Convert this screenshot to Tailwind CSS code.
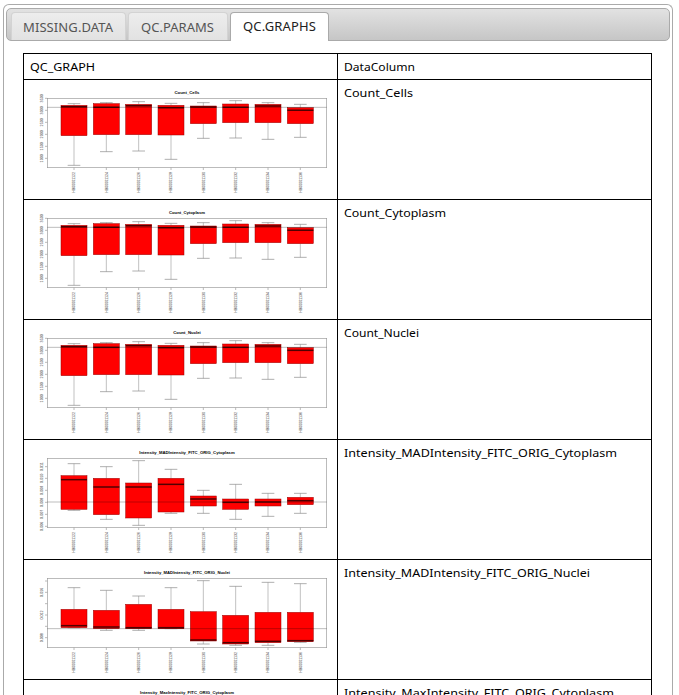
<!DOCTYPE html>
<html lang="en"><head><meta charset="utf-8"><title>QC Graphs</title>
<script src="https://cdn.jsdelivr.net/npm/@tailwindcss/browser@4"></script></head>
<body class="h-[695px] overflow-hidden bg-white pt-1 pl-[3px]">
<main class="h-[691px] w-[670px] overflow-hidden rounded-t-md border border-b-0 border-[#aaa] p-[3px] pb-0 pr-[2px] pl-[2px]">
<nav class="flex h-[33px] items-start gap-[2px] rounded-[5px] border border-[#aaa] bg-linear-to-b from-[#e2e2e2] to-[#c6c6c6] pt-[3px] pl-[4px] text-[13px] text-[#555]" style="font-family:'Noto Sans',sans-serif">
<a class="flex h-[28px] w-[115px] items-center justify-center rounded-t-[4px] border border-b-0 border-[#d3d3d3] bg-linear-to-b from-[#ededed] to-[#e2e2e2]"><svg class="h-[20px] w-[90px] overflow-visible"><text x="-1" y="14.5" textLength="90" fill="#555">MISSING.DATA</text></svg></a>
<a class="flex h-[28px] w-[100px] items-center justify-center rounded-t-[4px] border border-b-0 border-[#d3d3d3] bg-linear-to-b from-[#ededed] to-[#e2e2e2]"><svg class="h-[20px] w-[73px] overflow-visible"><text x="-1" y="14.5" textLength="73" fill="#555">QC.PARAMS</text></svg></a>
<a class="flex h-[29px] w-[99px] items-center justify-center rounded-t-[4px] border border-b-0 border-[#aaa] bg-white"><svg class="h-[20px] w-[73px] overflow-visible"><text x="0" y="14" textLength="73" fill="#212121">QC.GRAPHS</text></svg></a>
</nav>
<table class="mt-[12px] ml-[17px] w-[628px] table-fixed border-collapse text-black" style="font-family:'Noto Sans',sans-serif">
<colgroup><col class="w-[314px]"><col class="w-[314px]"></colgroup><tbody id="rows">
<tr class="h-[26px]"><td class="border border-black p-0 pl-[6px]"><svg class="block h-[25px] w-[290px] text-[11.5px]"><text x="0" y="17" textLength="65" lengthAdjust="spacingAndGlyphs">QC_GRAPH</text></svg></td><td class="border border-black p-0 pl-[6px]"><svg class="block h-[25px] w-[290px] text-[11.5px]"><text x="0" y="17" textLength="71" lengthAdjust="spacingAndGlyphs">DataColumn</text></svg></td></tr>
</tbody></table>
</main>
<script>
const countTicks=[[55,'3500'],[91,'3000'],[127,'2500'],[163,'2000'],[199,'1500'],[235,'1000']];
// Each box: upper whisker, box top, median, box bottom, lower whisker
const counts=[[71,76,80,167,256],[68,71,82,164,215],[65,73,77,164,213],[70,76,83,165,238],[68,78,81,131,175],[62,72,82,128,174],[68,73,78,128,178],[73,83,91,131,172]];
const madC=[[71,107,119,208,211],[80,115,141,224,238],[62,129,141,234,256],[88,115,133,216,220],[151,168,177,198,220],[133,177,187,208,238],[160,177,186,198,229],[160,172,182,194,220]];
const madN=[[83,148,197,203,203],[91,151,201,206,211],[108,133,203,206,211],[83,148,203,206,206],[62,155,240,243,252],[79,166,248,252,256],[67,157,244,248,256],[71,157,242,245,247]];
const cTicks=[[80,'0.011'],[115,'0.010'],[151,'0.009'],[187,'0.008'],[223,'0.007'],[259,'0.006']];
const data=[
['Count_Cells',69,75,counts,countTicks,82],
['Count_Cytoplasm',102,108,counts,countTicks,82],
['Count_Nuclei',75,83,counts,countTicks,82],
['Intensity_MADIntensity_FITC_ORIG_Cytoplasm',273,286,madC,cTicks,186],
['Intensity_MADIntensity_FITC_ORIG_Nuclei',246,258,madN,[[63,''],[97,'0.016'],[131,''],[165,'0.012'],[199,''],[233,'0.008']],206],
['Intensity_MaxIntensity_FITC_ORIG_Cytoplasm',270,282,null]];
function chart(title,tl,boxes,ticks,ref){
 const line=(x1,y1,x2,y2,c,w)=>`<line x1="${x1}" y1="${y1}" x2="${x2}" y2="${y2}" stroke="${c}" stroke-width="${w}"/>`;
 let s=`<text x="${501-tl/2}" y="41" textLength="${tl}" lengthAdjust="spacingAndGlyphs" font-size="12.5" font-weight="bold">${title}</text>`;
 if(boxes){
 s+='<rect x="82" y="55" width="838" height="208" fill="none" stroke="#999" stroke-width="2"/>';
 for(const [y,t] of ticks){ s+=line(75,y,82,y,'#999',2); if(t)s+=`<text transform="translate(68 ${y}) rotate(-90)" text-anchor="middle" font-size="11" fill="#333">${t}</text>`; }
 boxes.forEach((b,i)=>{const x=162+97*i;
  s+=line(x,b[0],x,b[1],'#999',1.8)+line(x,b[3],x,b[4],'#999',1.8)+line(x-19,b[0],x+19,b[0],'#888',2)+line(x-19,b[4],x+19,b[4],'#888',2);
  s+=`<rect x="${x-39}" y="${b[1]}" width="78" height="${b[3]-b[1]}" fill="#f00" stroke="#980000" stroke-width="1.5"/>`+line(x-39,b[2],x+39,b[2],'#500000',4.5)+line(x,263,x,270,'#999',2);
  s+=`<text transform="translate(${x+4} 338) rotate(-90)" textLength="62" lengthAdjust="spacingAndGlyphs" font-size="10.5" fill="#333">HB0000${1122+2*i}</text>`;});
 s+=`<line x1="82" y1="${ref}" x2="920" y2="${ref}" stroke="#000" stroke-opacity=".4" stroke-width="2"/>`;
 }
 return `<svg viewBox="12 0 939 357" class="block h-[119px] w-[313px]" style="font-family:'Liberation Sans',sans-serif">${s}</svg>`;
}
document.getElementById('rows').insertAdjacentHTML('beforeend',data.map(([t,w,tl,b,k,r])=>`<tr class="h-[120px]"><td class="border border-black p-0 align-top">${chart(t,tl,b,k,r)}</td><td class="border border-black p-0 pl-[6px] align-top"><svg class="block h-[25px] w-[300px] text-[11.5px]"><text x="0" y="17" textLength="${w}" lengthAdjust="spacingAndGlyphs">${t}</text></svg></td></tr>`).join(''));
</script>
</body></html>
